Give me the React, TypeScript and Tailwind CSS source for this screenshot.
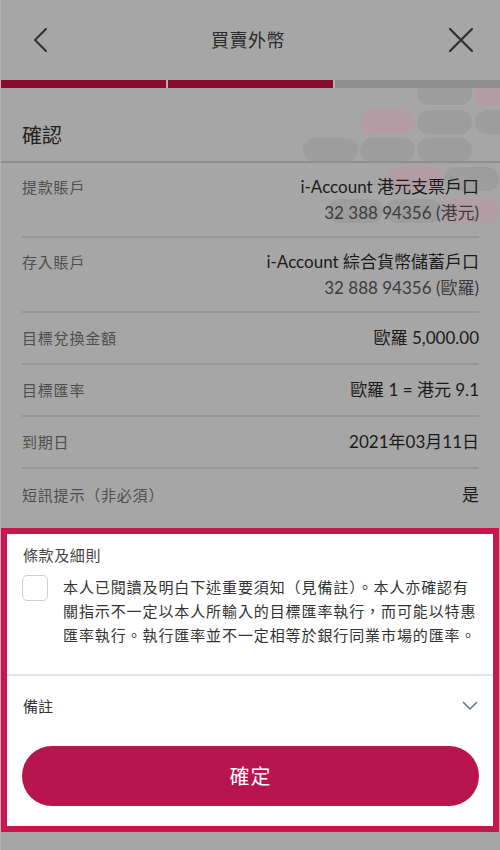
import React from 'react';

const font = { fontFamily: '"Lato", "Noto Sans CJK TC", sans-serif' };
const cjk = { fontFamily: '"Noto Sans CJK TC", sans-serif', fontFeatureSettings: '"locl"' };

type Row = { label: string; lines: string[] };

const rows: Row[] = [
    { label: '提款賬戶', lines: ['i-Account 港元支票戶口', '32 388 94356 (港元)'] },
    { label: '存入賬戶', lines: ['i-Account 綜合貨幣儲蓄戶口', '32 888 94356 (歐羅)'] },
    { label: '目標兌換金額', lines: ['歐羅 5,000.00'] },
    { label: '目標匯率', lines: ['歐羅 1 = 港元 9.1'] },
    { label: '到期日', lines: ['2021年03月11日'] },
];

// decorative pills behind the top right of the page
const pills = [
    { x: 416, y: 81, pink: false },
    { x: 474, y: 81, pink: true },
    { x: 359, y: 110, pink: true },
    { x: 416, y: 110, pink: false },
    { x: 474, y: 110, pink: false },
    { x: 302, y: 138, pink: false },
    { x: 359, y: 138, pink: false },
    { x: 416, y: 138, pink: false },
    { x: 386, y: 167, pink: true },
    { x: 443, y: 167, pink: false },
    { x: 327, y: 199, pink: false },
    { x: 385, y: 199, pink: false },
    { x: 443, y: 199, pink: true },
];

const App: React.FC = () => {
    return (
        <div lang="zh-TW" className="relative w-[500px] h-[850px] bg-[#a6a6a6] overflow-hidden border-l border-[#b4b4b4]" style={font}>
            {pills.map((p, i) => (
                <div
                    key={i}
                    className={`absolute w-[55px] h-[24px] rounded-full ${p.pink ? 'bg-[#b39ca3]' : 'bg-[#9d9d9d]'}`}
                    style={{ left: p.x, top: p.y }}
                />
            ))}

            <div className="relative">
                {/* header */}
                <div className="h-[80px] flex items-center justify-between pl-[31px] pr-[26px]">
                    <svg width="16" height="26" viewBox="0 0 16 26" fill="none" stroke="#303030" strokeWidth="2" strokeLinecap="round" strokeLinejoin="round">
                        <path d="M14 2 L3 13 L14 24" />
                    </svg>
                    <div className="text-[18px] text-[#2b2b2b] tracking-[0.5px]">買賣外幣</div>
                    <svg width="26" height="26" viewBox="0 0 26 26" fill="none" stroke="#303030" strokeWidth="2.2" strokeLinecap="round">
                        <path d="M2 2 L24 24 M24 2 L2 24" />
                    </svg>
                </div>

                {/* progress */}
                <div className="flex gap-[2px] h-[8px] bg-[#b0b0b0]">
                    <div className="flex-1 bg-[#880b32]" />
                    <div className="flex-1 bg-[#880b32]" />
                    <div className="flex-1 bg-[#8e8e8e]" />
                </div>

                <div className="pl-[21px] pt-[33px] pb-[12px] border-b-2 border-[#8f8f8f]">
                    <div className="text-[20px] leading-[28px] text-[#222]">確認</div>
                </div>

                <div className="px-[21px]">
                    {rows.map((r, i) => (
                        <div
                            key={r.label}
                            className={`flex items-start justify-between border-b-2 border-[#969696] ${i < 2 ? 'pt-[11px] pb-[10px]' : 'py-[12px]'}`}
                        >
                            <div className="text-[15px] tracking-[0.8px] leading-[26px] text-[#4e4e4e]">{r.label}</div>
                            <div className="text-right">
                                {r.lines.map((l, j) => (
                                    <div key={l} className={`text-[17px] leading-[26px] ${j === 0 ? 'text-[#1b1b1b]' : 'text-[#3c3c3c]'}`}>{l}</div>
                                ))}
                            </div>
                        </div>
                    ))}
                    <div className="flex justify-between h-[59px] pt-[13px]">
                        <div className="text-[15px] tracking-[0.8px] leading-[26px] text-[#4e4e4e]" style={cjk}>短訊提示（非必須）</div>
                        <div className="text-[17px] leading-[26px] text-[#1b1b1b]">是</div>
                    </div>
                </div>

                {/* highlighted terms box */}
                <div className="w-[498px] border-[6px] border-[#c8174f] bg-white">
                    <div className="pl-[16px] pt-[10px] text-[15px] tracking-[0.6px] leading-[22px] text-[#444]">條款及細則</div>
                    <div className="flex gap-[15px] pl-[15px] mt-[9px]">
                        <div className="w-[26px] h-[26px] shrink-0 rounded-[5px] border border-[#cfcfcf] bg-white" />
                        <p className="w-[418px] text-[15px] tracking-[0.9px] leading-[24px] text-[#333]" style={cjk}>
                            本人已閱讀及明白下述重要須知（見備註）。本人亦確認有關指示不一定以本人所輸入的目標匯率執行，而可能以特惠匯率執行。執行匯率並不一定相等於銀行同業市場的匯率。
                        </p>
                    </div>
                    <div className="mt-[27px] h-[2px] bg-[#e6e6e6]" />
                    <div className="flex items-center justify-between pl-[16px] pr-[15px] pt-[18px]">
                        <div className="text-[15px] leading-[24px] text-[#333]">備註</div>
                        <svg width="16" height="10" viewBox="0 0 16 10" fill="none" stroke="#5c6f9c" strokeWidth="1.5" strokeLinecap="round" strokeLinejoin="round">
                            <path d="M1.5 1.5 L8 8 L14.5 1.5" />
                        </svg>
                    </div>
                    <div className="pl-[15px] pr-[14px] pt-[28px] pb-[20px]">
                        <button className="w-full h-[60px] rounded-full bg-[#b8154f] text-white text-[20px] tracking-[1px]">確定</button>
                    </div>
                </div>
            </div>
        </div>
    );
};

export default App;
